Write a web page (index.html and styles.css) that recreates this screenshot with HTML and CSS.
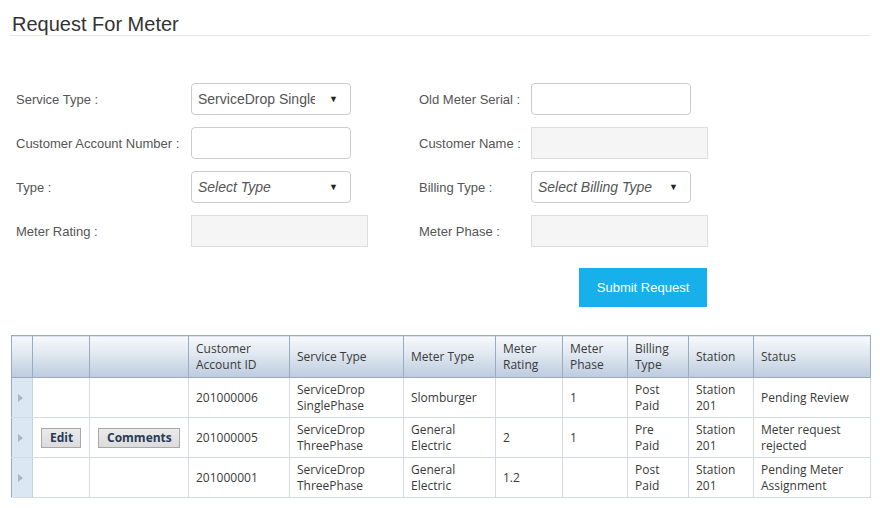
FILE: index.html
```html
<!DOCTYPE html>
<html>
<head>
<meta charset="utf-8">
<link rel="stylesheet" href="styles.css">
</head>
<body>
<div class="page">
  <h1 class="title">Request For Meter</h1>
  <div class="form">
    <div class="grid">
      <label class="lbl">Service Type :</label>
      <div class="field"><div class="select w160"><span class="sel-text">ServiceDrop SinglePhase</span><span class="caret">&#9660;</span></div></div>
      <label class="lbl">Old Meter Serial :</label>
      <div class="field"><div class="input w160"></div></div>

      <label class="lbl">Customer Account Number :</label>
      <div class="field"><div class="input w160"></div></div>
      <label class="lbl">Customer Name :</label>
      <div class="field"><div class="input disabled w177"></div></div>

      <label class="lbl">Type :</label>
      <div class="field"><div class="select w160"><span class="sel-text placeholder">Select Type</span><span class="caret">&#9660;</span></div></div>
      <label class="lbl">Billing Type :</label>
      <div class="field"><div class="select w160"><span class="sel-text placeholder">Select Billing Type</span><span class="caret">&#9660;</span></div></div>

      <label class="lbl">Meter Rating :</label>
      <div class="field"><div class="input disabled w177"></div></div>
      <label class="lbl">Meter Phase :</label>
      <div class="field"><div class="input disabled w177"></div></div>
    </div>
    <div class="actions"><button class="submit">Submit Request</button></div>
  </div>

  <table class="grid-table">
    <colgroup>
      <col class="c1"><col class="c2"><col class="c3"><col class="c4"><col class="c5"><col class="c6"><col class="c7"><col class="c8"><col class="c9"><col class="c10"><col class="c11">
    </colgroup>
    <thead>
      <tr>
        <th class="hier"></th><th></th><th></th>
        <th>Customer<br>Account ID</th>
        <th>Service Type</th>
        <th>Meter Type</th>
        <th>Meter<br>Rating</th>
        <th>Meter<br>Phase</th>
        <th>Billing<br>Type</th>
        <th>Station</th>
        <th>Status</th>
      </tr>
    </thead>
    <tbody>
      <tr>
        <td class="hier"><span class="tri"></span></td><td></td><td></td>
        <td>201000006</td>
        <td>ServiceDrop<br>SinglePhase</td>
        <td>Slomburger</td>
        <td></td>
        <td>1</td>
        <td>Post<br>Paid</td>
        <td>Station<br>201</td>
        <td>Pending Review</td>
      </tr>
      <tr>
        <td class="hier"><span class="tri"></span></td>
        <td><button class="gbtn">Edit</button></td>
        <td><button class="gbtn">Comments</button></td>
        <td>201000005</td>
        <td>ServiceDrop<br>ThreePhase</td>
        <td>General<br>Electric</td>
        <td>2</td>
        <td>1</td>
        <td>Pre<br>Paid</td>
        <td>Station<br>201</td>
        <td>Meter request<br>rejected</td>
      </tr>
      <tr>
        <td class="hier"><span class="tri"></span></td><td></td><td></td>
        <td>201000001</td>
        <td>ServiceDrop<br>ThreePhase</td>
        <td>General<br>Electric</td>
        <td>1.2</td>
        <td></td>
        <td>Post<br>Paid</td>
        <td>Station<br>201</td>
        <td>Pending Meter<br>Assignment</td>
      </tr>
    </tbody>
  </table>
</div>
</body>
</html>
```

FILE: styles.css
```css
* { box-sizing: border-box; }
html, body { margin: 0; padding: 0; background: #fff; }
body { font-family: "Liberation Sans", Arial, sans-serif; color: #333; }

.page { padding: 0 10px 0 10px; }

.title {
  margin: 12px 0 0 0;
  padding: 0 0 0 2px;
  font-size: 20px;
  font-weight: normal;
  line-height: 24px;
  height: 24px;
  color: #333;
  border-bottom: 1px solid #e5e5e5;
}

.form { margin: 47px 0 0 6px; width: 691px; }

.grid {
  display: grid;
  grid-template-columns: 175px 228px 112px 1fr;
  grid-auto-rows: 32px;
  row-gap: 12px;
  align-items: center;
}

.lbl { font-size: 13px; color: #555; white-space: nowrap; }

.field { display: flex; }

.input, .select {
  height: 32px;
  border: 1px solid #ccc;
  border-radius: 4px;
  background: #fff;
}
.w160 { width: 160px; }
.w177 { width: 177px; }
.input.disabled {
  background: #f5f5f5;
  border-color: #ddd;
  border-radius: 0;
}

.select {
  display: flex;
  align-items: center;
  padding: 0 12px 0 6px;
  overflow: hidden;
}
.sel-text {
  flex: 1;
  min-width: 0;
  font-size: 14px;
  color: #555;
  white-space: nowrap;
  overflow: hidden;
  margin-right: 14px;
}
.sel-text.placeholder { font-style: italic; }
.caret { flex: none; font-size: 9px; color: #222; }

.actions { display: flex; justify-content: flex-end; margin-top: 21px; }
.submit {
  width: 128px;
  height: 39px;
  border: none;
  background: #18b0ea;
  color: #fff;
  font-family: "Liberation Sans", Arial, sans-serif;
  font-size: 13px;
  padding: 0;
}

.grid-table {
  margin: 28px 0 0 1px;
  width: 859px;
  table-layout: fixed;
  border-collapse: collapse;
  font-family: "Open Sans", "Noto Sans", sans-serif;
  font-size: 12px;
  color: #3a3a3a;
  border: 1px solid #9aabc1;
}
.c1 { width: 21px; }
.c2 { width: 57px; }
.c3 { width: 99px; }
.c4 { width: 101px; }
.c5 { width: 114px; }
.c6 { width: 92px; }
.c7 { width: 67px; }
.c8 { width: 65px; }
.c9 { width: 61px; }
.c10 { width: 65px; }
.c11 { width: 117px; }

.grid-table th {
  height: 42px;
  font-weight: normal;
  text-align: left;
  vertical-align: middle;
  padding: 1px 6px 0 7px;
  line-height: 16px;
  background: linear-gradient(to bottom, #f7f9fc 0%, #dfe7f0 45%, #bccbde 100%);
  border: 1px solid #9aabc1;
}
.grid-table td {
  height: 40px;
  padding: 1px 6px 0 7px;
  line-height: 16px;
  vertical-align: middle;
  border: 1px solid #d5dbe4;
  border-top: 1px solid #d9dee6;
}
.grid-table tbody tr:first-child td { border-top: 1px solid #9aabc1; }
.grid-table td.hier {
  background: #dce7f4;
  border-left: 1px solid #9aabc1;
  border-right: 1px solid #c6d2e1;
  padding: 0 0 0 6px;
}
.grid-table th.hier { padding: 0; }

.tri {
  display: block;
  width: 0;
  height: 0;
  border-top: 4px solid transparent;
  border-bottom: 4px solid transparent;
  border-left: 5px solid #abb6c4;
}

.gbtn {
  font-family: "Open Sans", "Noto Sans", sans-serif;
  font-weight: bold;
  font-size: 12px;
  color: #283a56;
  background: linear-gradient(to bottom, #eaeaea, #dcdcdc);
  border: 1px solid #a8a8a8;
  height: 20px;
  padding: 0 7px 0 8px;
  line-height: 16px;
  margin-left: 1px;
}
```
